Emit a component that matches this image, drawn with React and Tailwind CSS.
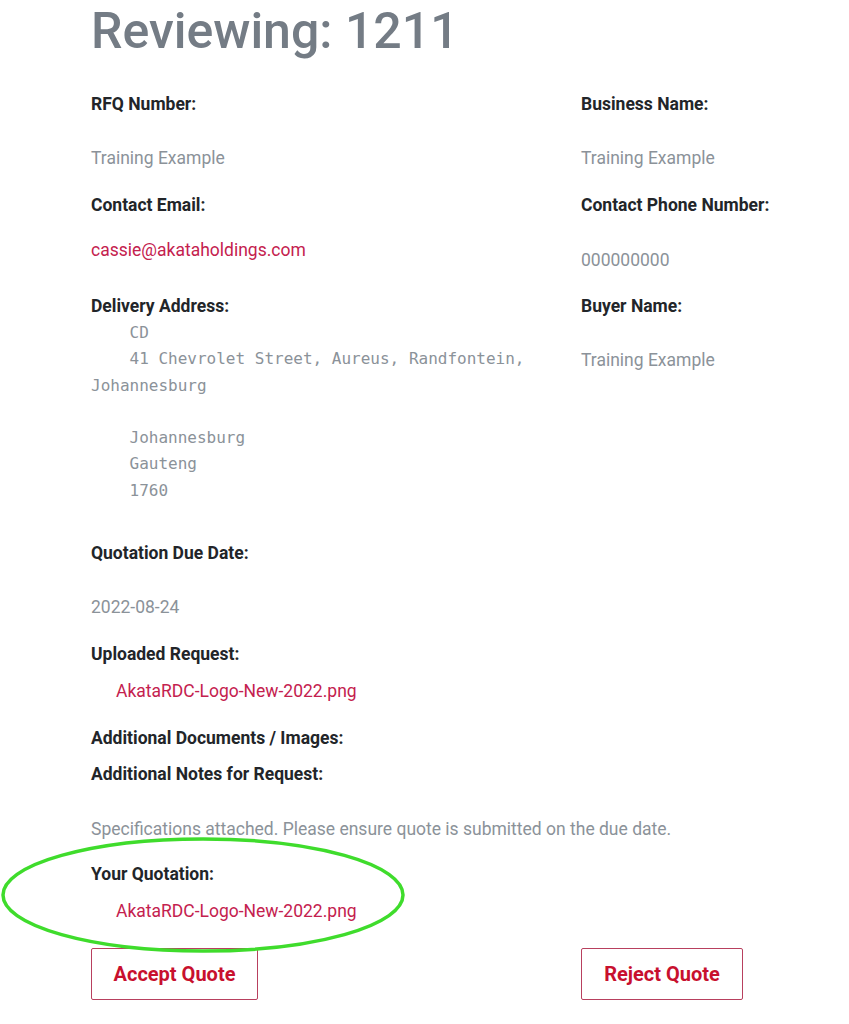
const Label = ({ children, className = "" }) => (
  <div className={`text-[17.5px] leading-[24px] font-bold text-[#222529] ${className}`}>
    {children}
  </div>
);

const Value = ({ children, className = "" }) => (
  <div className={`text-[17.5px] leading-[24px] text-[#8b9299] ${className}`}>{children}</div>
);

const FileLink = ({ children, className = "" }) => (
  <div className={`pl-[25px] text-[17.5px] leading-[24px] text-[#c4214e] ${className}`}>
    {children}
  </div>
);

const address = `    CD
    41 Chevrolet Street, Aureus, Randfontein,
Johannesburg

    Johannesburg
    Gauteng
    1760`;

export default function App() {
  return (
    <div className="relative min-h-[1024px] bg-white font-['Roboto',sans-serif]">
      <div className="pl-[91px] pr-[20px]">
        <h1 className="pt-[4px] text-[50px] leading-[54px] font-medium text-[#747c85]">
          Reviewing: 1211
        </h1>

        {/* two column details */}
        <div className="mt-[34px] grid grid-cols-[490px_1fr]">
          <div>
            <Label>RFQ Number:</Label>
            <Value className="mt-[30px]">Training Example</Value>
          </div>
          <div>
            <Label>Business Name:</Label>
            <Value className="mt-[30px]">Training Example</Value>
          </div>

          <div className="mt-[23px]">
            <Label>Contact Email:</Label>
            <div className="mt-[21px] text-[17.5px] leading-[24px] text-[#c4214e]">
              cassie@akataholdings.com
            </div>
          </div>
          <div className="mt-[23px]">
            <Label>Contact Phone Number:</Label>
            <Value className="mt-[31px]">000000000</Value>
          </div>

          <div className="mt-[22px]">
            <Label>Delivery Address:</Label>
            <pre className="mt-[2px] whitespace-pre font-['DejaVu_Sans_Mono',monospace] text-[16px] leading-[26.3px] text-[#8b9299]">
              {address}
            </pre>
          </div>
          <div className="mt-[22px]">
            <Label>Buyer Name:</Label>
            <Value className="mt-[30px]">Training Example</Value>
          </div>
        </div>

        <Label className="mt-[37px]">Quotation Due Date:</Label>
        <Value className="mt-[30px]">2022-08-24</Value>

        <Label className="mt-[23px]">Uploaded Request:</Label>
        <FileLink className="mt-[13px]">AkataRDC-Logo-New-2022.png</FileLink>

        <Label className="mt-[23px]">Additional Documents / Images:</Label>
        <Label className="mt-[12px]">Additional Notes for Request:</Label>
        <Value className="mt-[31px]">
          Specifications attached. Please ensure quote is submitted on the due date.
        </Value>

        <Label className="mt-[21px]">Your Quotation:</Label>
        <FileLink className="mt-[13px]">AkataRDC-Logo-New-2022.png</FileLink>

        <div className="mt-[25px] grid grid-cols-[490px_1fr]">
          <div>
            <button className="h-[52px] w-[167px] rounded-[2px] border border-[#b8405e] text-[20px] font-bold text-[#c8102e]">
              Accept Quote
            </button>
          </div>
          <div>
            <button className="h-[52px] w-[162px] rounded-[2px] border border-[#b8405e] text-[20px] font-bold text-[#c8102e]">
              Reject Quote
            </button>
          </div>
        </div>
      </div>

      {/* green annotation ring */}
      <svg
        className="pointer-events-none absolute left-0 top-[836px]"
        width="408"
        height="120"
        viewBox="0 0 408 120"
      >
        <ellipse cx="203" cy="59" rx="200" ry="56" fill="none" stroke="#3fdc2c" strokeWidth="3.5" />
      </svg>
    </div>
  );
}
